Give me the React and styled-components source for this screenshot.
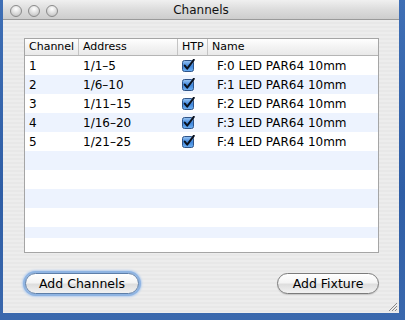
import styled, { createGlobalStyle } from 'styled-components'

const Global = createGlobalStyle`
  html, body { margin: 0; padding: 0; }
  body {
    width: 405px;
    height: 320px;
    overflow: hidden;
    background: linear-gradient(180deg, #3f6fb5 0%, #2f5ea6 60%, #3a68ad 100%);
    font-family: "DejaVu Sans", "Lucida Grande", sans-serif;
  }
`;

const Window = styled.div`
  margin-left: 3px;
  width: 396px;
  height: 313px;
  display: flex;
  flex-direction: column;
  background: repeating-linear-gradient(180deg, #ededed 0px, #ededed 2px, #e8e8e8 2px, #e8e8e8 4px);
  position: relative;
`;

const TitleBar = styled.div`
  height: 20px;
  flex: none;
  display: flex;
  align-items: center;
  background: linear-gradient(180deg, #f0f0f0 0%, #dcdcdc 50%, #cdcdcd 100%);
  border-bottom: 1px solid #9a9a9a;
  box-sizing: border-box;
  position: relative;
`;

const Lights = styled.div`
  display: flex;
  gap: 6px;
  padding-left: 7px;
  padding-top: 2px;
`;

const Light = styled.span`
  width: 12px;
  height: 12px;
  border-radius: 50%;
  box-sizing: border-box;
  border: 1px solid #8a8a8a;
  background: radial-gradient(circle at 50% 30%, #ffffff 0%, #e4e4e4 40%, #b8b8b8 100%);
`;

const Title = styled.div`
  position: absolute;
  left: 0;
  right: 0;
  top: 3px;
  text-align: center;
  font-size: 12px;
  color: #111;
  pointer-events: none;
`;

const Content = styled.div`
  flex: 1;
  display: flex;
  flex-direction: column;
  padding: 18px 20px 0 21px;
`;

const Table = styled.div`
  width: 355px;
  height: 215px;
  box-sizing: border-box;
  border: 1px solid #a5a5a5;
  background: #fff;
  display: flex;
  flex-direction: column;
  overflow: hidden;
`;

const Cols = '54px 99px 30px 1fr';

const Header = styled.div`
  display: grid;
  grid-template-columns: ${Cols};
  height: 16px;
  flex: none;
  background: linear-gradient(180deg, #ffffff 0%, #f3f3f3 50%, #e9e9e9 100%);
  border-bottom: 1px solid #b5b5b5;
`;

const HeadCell = styled.div`
  font-size: 11px;
  line-height: 16px;
  padding-left: 4px;
  color: #000;
  border-right: 1px solid ${p => (p.last ? 'transparent' : '#c4c4c4')};
  white-space: nowrap;
  overflow: hidden;
`;

const Body = styled.div`
  height: 182px;
  flex: none;
  overflow: hidden;
`;

const Row = styled.div`
  display: grid;
  grid-template-columns: ${Cols};
  height: 19px;
  align-items: center;
  background: ${p => (p.odd ? '#edf3fe' : '#ffffff')};
`;

const Cell = styled.div`
  font-size: 12px;
  padding-left: ${p => p.pad || 4}px;
  color: #000;
  white-space: nowrap;
`;

const CheckWrap = styled.div`
  display: flex;
  padding-left: 4px;
`;

const Footer = styled.div`
  display: flex;
  justify-content: space-between;
  align-items: center;
  margin-top: 20px;
`;

const Button = styled.button`
  height: 21px;
  width: ${p => p.w}px;
  border-radius: 11px;
  border: 1px solid #7b7b7b;
  background: linear-gradient(180deg, #ffffff 0%, #f4f4f4 45%, #dedede 55%, #f2f2f2 100%);
  font-family: "DejaVu Sans", "Lucida Grande", sans-serif;
  font-size: 12.5px;
  color: #000;
  padding: 0;
  box-shadow: ${p => (p.focused ? '0 0 0 2px #8fb4e2, 0 0 2px 3px #b7cfee' : '0 1px 1px rgba(0,0,0,0.15)')};
  ${p => (p.focused ? 'border-color: #5d7ea8;' : '')}
  margin-left: ${p => (p.focused ? 1 : 0)}px;
`;

const Grip = styled.svg`
  position: absolute;
  right: 2px;
  bottom: 2px;
`;

function Check() {
  return (
    <svg width="13" height="13" viewBox="0 0 13 13">
      <defs>
        <linearGradient id="cb" x1="0" y1="0" x2="0" y2="1">
          <stop offset="0" stopColor="#9cc7f4" />
          <stop offset="0.5" stopColor="#3e86dc" />
          <stop offset="1" stopColor="#6fb0f2" />
        </linearGradient>
      </defs>
      <rect x="0.5" y="1.5" width="11" height="11" rx="2" fill="url(#cb)" stroke="#2f5488" />
      <path d="M2.8 6.6 L5.2 9.6 L11.8 0.8" fill="none" stroke="#0a1220" strokeWidth="2" strokeLinecap="round" strokeLinejoin="round" />
    </svg>
  );
}

const channels = [
  { ch: '1', addr: '1/1\u20135', name: 'F:0 LED PAR64 10mm' },
  { ch: '2', addr: '1/6\u201310', name: 'F:1 LED PAR64 10mm' },
  { ch: '3', addr: '1/11\u201315', name: 'F:2 LED PAR64 10mm' },
  { ch: '4', addr: '1/16\u201320', name: 'F:3 LED PAR64 10mm' },
  { ch: '5', addr: '1/21\u201325', name: 'F:4 LED PAR64 10mm' },
];

export default function App() {
  const blanks = Array.from({ length: 5 }, (_, i) => i + 5);
  return (
    <>
      <Global />
      <Window>
        <TitleBar>
          <Lights>
            <Light />
            <Light />
            <Light />
          </Lights>
          <Title>Channels</Title>
        </TitleBar>
        <Content>
          <Table>
            <Header>
              <HeadCell>Channel</HeadCell>
              <HeadCell>Address</HeadCell>
              <HeadCell>HTP</HeadCell>
              <HeadCell last>Name</HeadCell>
            </Header>
            <Body>
              {channels.map((c, i) => (
                <Row key={c.ch} odd={i % 2 === 1}>
                  <Cell>{c.ch}</Cell>
                  <Cell>{c.addr}</Cell>
                  <CheckWrap><Check /></CheckWrap>
                  <Cell pad={9}>{c.name}</Cell>
                </Row>
              ))}
              {blanks.map(i => (
                <Row key={i} odd={i % 2 === 1} />
              ))}
            </Body>
          </Table>
          <Footer>
            <Button focused w={114}>Add Channels</Button>
            <Button w={102}>Add Fixture</Button>
          </Footer>
        </Content>
        <Grip width="10" height="10" viewBox="0 0 10 10">
          <path d="M2 10 L10 2 M5 10 L10 5 M8 10 L10 8" stroke="#888" strokeWidth="1" />
        </Grip>
      </Window>
    </>
  );
}
